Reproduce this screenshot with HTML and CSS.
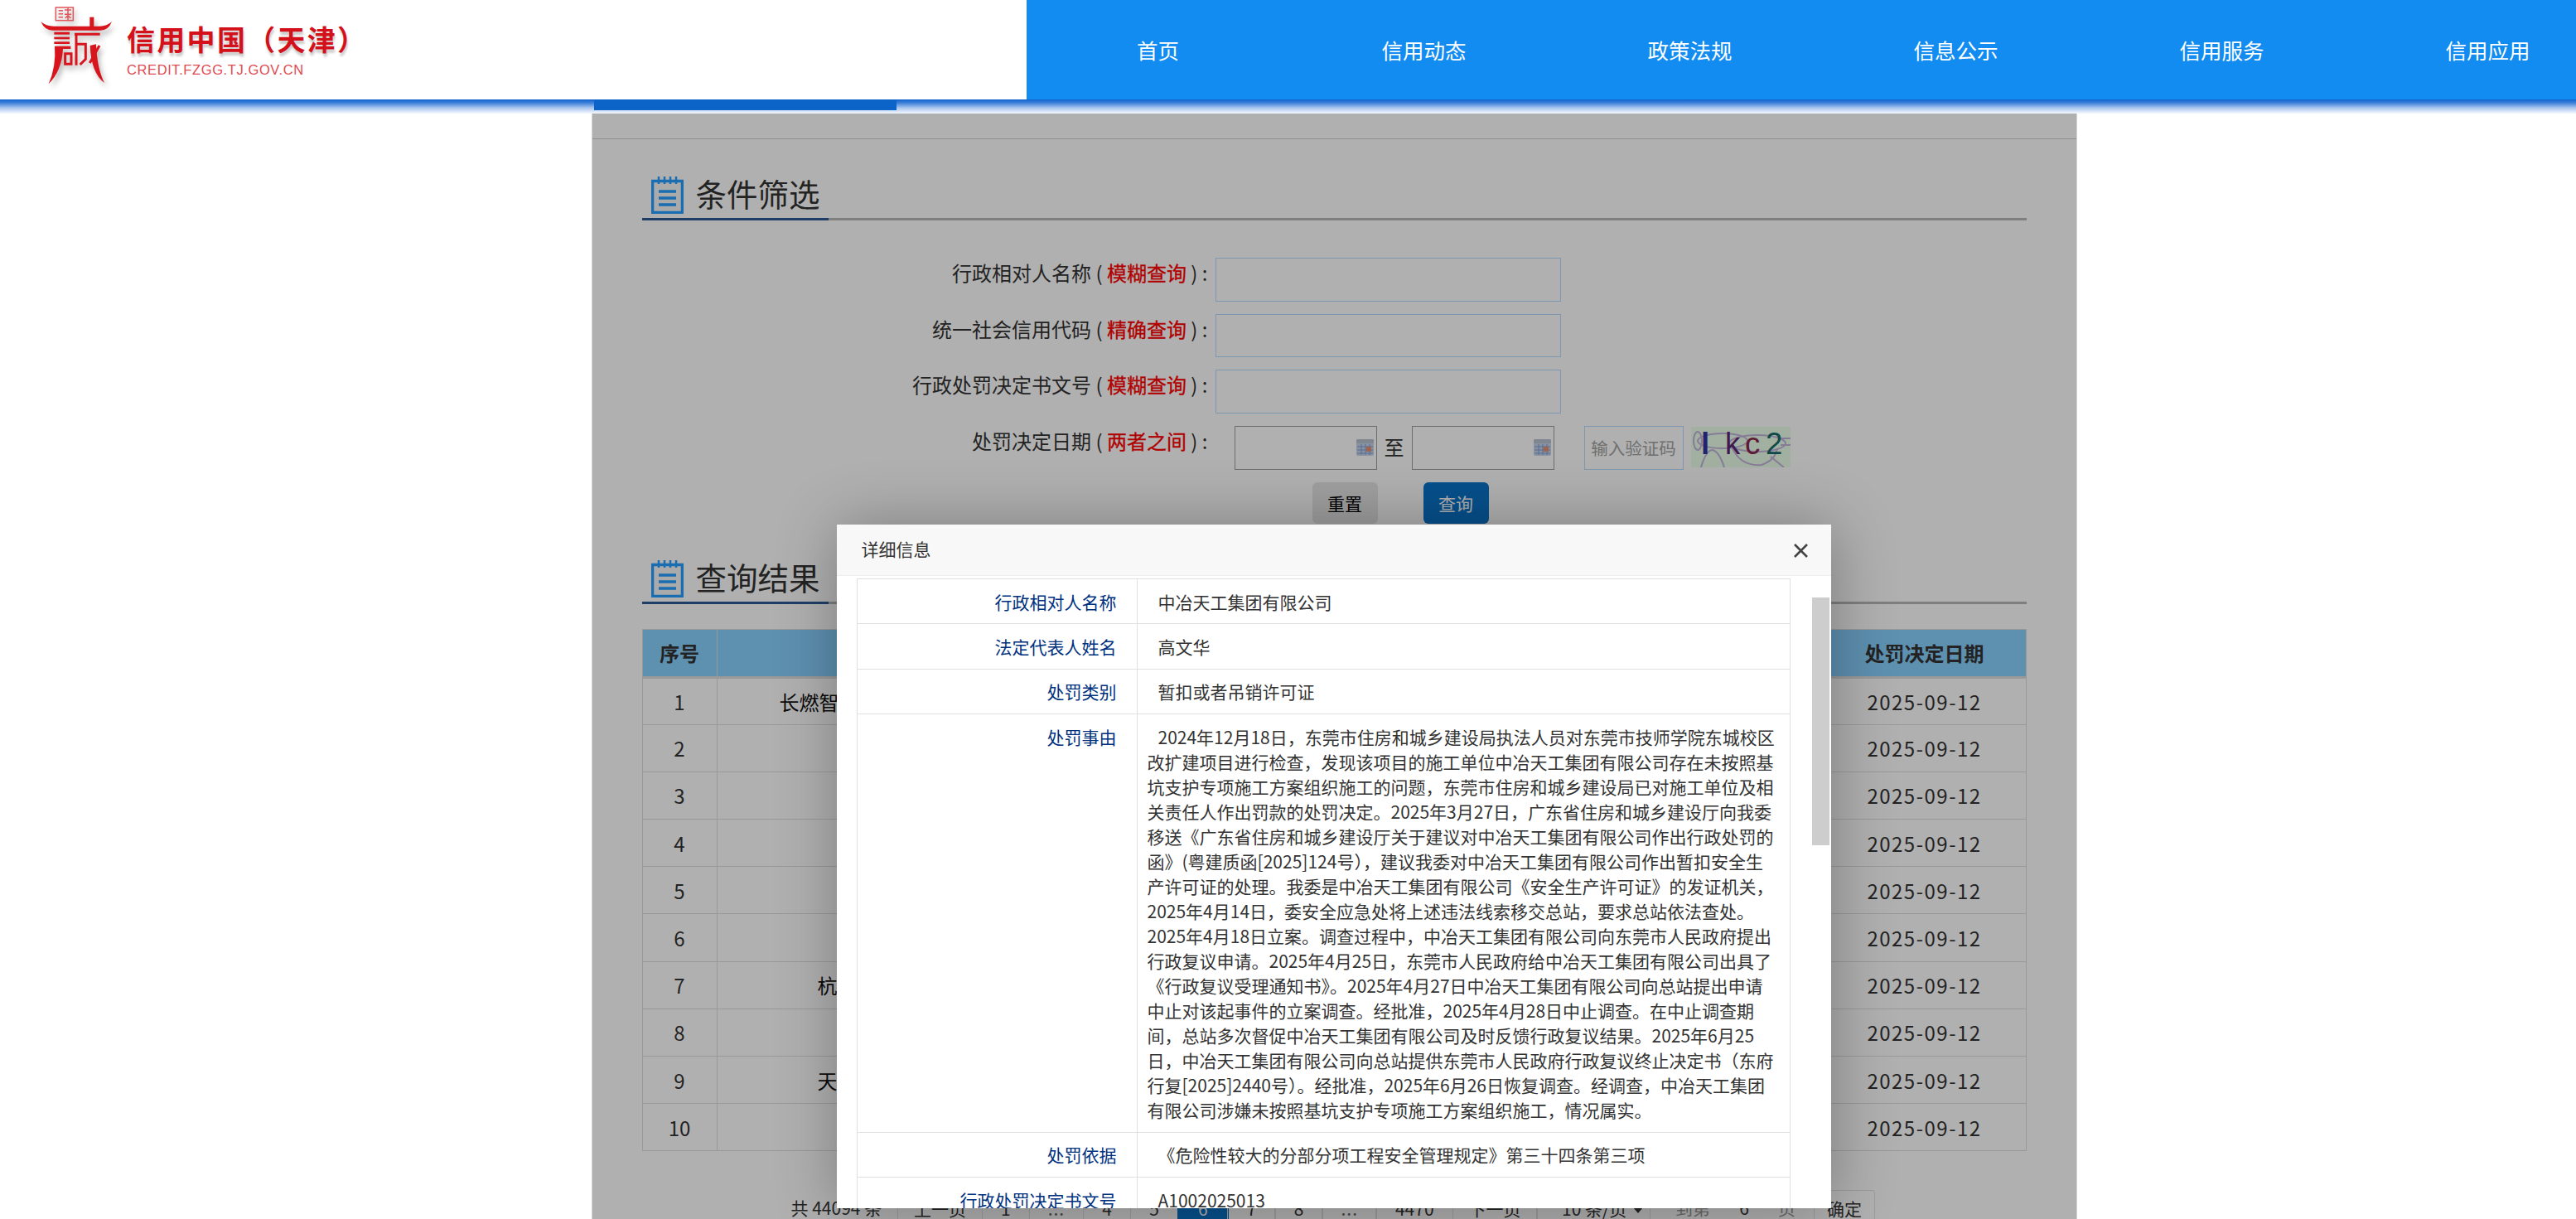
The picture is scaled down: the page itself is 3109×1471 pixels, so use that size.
FILE: index.html
```html
<!DOCTYPE html>
<html lang="zh-CN">
<head>
<meta charset="utf-8">
<title>信用中国（天津）</title>
<link rel="stylesheet" href="styles.css">
</head>
<body>
<header class="site-header">
  <div class="brand">
    <svg class="emblem" viewBox="0 0 110 120" aria-hidden="true">
      <g transform="scale(.3333)">
        <g fill="none" stroke="#e2555a" stroke-width="4.5">
          <rect x="82" y="27" width="63" height="47"/>
          <path d="M92 38h16M92 50h16M92 62h16M114 36h24M126 28v44M114 52h24M116 66l8-8M136 66l-8-8"/>
        </g>
        <g fill="#d8141c">
          <path d="M28 78Q45 95 75 95L240 95Q268 95 285 78Q272 112 240 110L75 110Q42 112 28 78Z"/>
          <rect x="205" y="62" width="15" height="40"/>
          <rect x="76" y="116" width="56" height="9"/>
          <rect x="76" y="134" width="56" height="8"/>
          <rect x="76" y="151" width="56" height="8"/>
          <path d="M78 167L136 167L136 177L108 177Q104 256 56 304Q84 240 78 167Z"/>
          <path d="M228 160Q232 250 258 300Q210 264 206 165Z"/>
        </g>
        <g fill="none" stroke="#d8141c" stroke-width="9">
          <path d="M116 194H138V232H116Z"/>
          <path d="M156 125V236M150 124H242M160 160H190V214L170 234"/>
          <path d="M240 165L205 228"/>
        </g>
      </g>
    </svg>
    <div class="brand-text">
      <div class="brand-name">信用中国（天津）</div>
      <div class="brand-url">CREDIT.FZGG.TJ.GOV.CN</div>
    </div>
  </div>
  <nav class="main-nav">
    <a>首页</a><a>信用动态</a><a>政策法规</a><a>信息公示</a><a>信用服务</a><a>信用应用</a>
  </nav>
</header>
<div class="strip"><div class="strip-tab"></div></div>

<main class="frame">
  <div class="frame-top"></div>
  <div class="content">
    <div class="sec-head">
      <div class="sec-title">
        <svg class="note-icon" viewBox="0 0 39 45" aria-hidden="true">
          <path class="note-body" d="M1.5 5.5H37.5V43.5H1.5Z"/>
          <path class="note-rings" d="M9 0V9M16 0V9M23 0V9M30 0V9"/>
          <path class="note-lines" d="M9 18H30M9 26H30M9 34H30"/>
        </svg>
        <span>条件筛选</span>
      </div>
    </div>

    <form class="filter">
      <div class="form-row">
        <label class="form-label">行政相对人名称 ( <em>模糊查询</em> ) :</label>
        <input class="text-input">
      </div>
      <div class="form-row">
        <label class="form-label">统一社会信用代码 ( <em>精确查询</em> ) :</label>
        <input class="text-input">
      </div>
      <div class="form-row">
        <label class="form-label">行政处罚决定书文号 ( <em>模糊查询</em> ) :</label>
        <input class="text-input">
      </div>
      <div class="form-row date-row">
        <label class="form-label">处罚决定日期 ( <em>两者之间</em> ) :</label>
        <div class="date-box">
          <svg class="cal-icon" viewBox="0 0 21 20" aria-hidden="true">
            <rect width="21" height="20" rx="2" fill="#c7d4e8"/>
            <rect width="21" height="5" rx="1.5" fill="#b9c3cf"/>
            <path d="M1 9H20M1 13H20M1 17H20M6 6V19M11 6V19M16 6V19" stroke="#7f9fd8" stroke-width="1"/>
            <rect x="12" y="9" width="6" height="6" fill="#e8906e"/>
          </svg>
        </div>
        <span class="date-sep">至</span>
        <div class="date-box">
          <svg class="cal-icon" viewBox="0 0 21 20" aria-hidden="true">
            <rect width="21" height="20" rx="2" fill="#c7d4e8"/>
            <rect width="21" height="5" rx="1.5" fill="#b9c3cf"/>
            <path d="M1 9H20M1 13H20M1 17H20M6 6V19M11 6V19M16 6V19" stroke="#7f9fd8" stroke-width="1"/>
            <rect x="12" y="9" width="6" height="6" fill="#e8906e"/>
          </svg>
        </div>
        <div class="captcha-input">输入验证码</div>
        <svg class="captcha" viewBox="0 0 120 49" aria-label="验证码">
          <rect width="120" height="49" fill="#ebffeb"/>
          <g fill="none" stroke="#c3b4dc" stroke-width="2">
            <ellipse cx="38" cy="17" rx="30" ry="9"/>
            <ellipse cx="8" cy="17" rx="5" ry="11"/>
            <ellipse cx="80" cy="20" rx="34" ry="10"/>
            <path d="M12 49Q18 28 26 28Q34 30 40 49"/>
            <path d="M48 22Q58 48 85 46Q102 40 104 26"/>
            <path d="M96 36L112 49M108 14H120M108 22H120"/>
          </g>
          <text class="cap-l" x="12" y="33">l</text>
          <text class="cap-k" x="41" y="33">k</text>
          <text class="cap-c" x="65" y="33">c</text>
          <text class="cap-2" x="90" y="33">2</text>
        </svg>
      </div>
      <div class="btn-row">
        <button type="button" class="btn btn-reset">重置</button>
        <button type="button" class="btn btn-query">查询</button>
      </div>
    </form>

    <div class="sec-head second">
      <div class="sec-title">
        <svg class="note-icon" viewBox="0 0 39 45" aria-hidden="true">
          <path class="note-body" d="M1.5 5.5H37.5V43.5H1.5Z"/>
          <path class="note-rings" d="M9 0V9M16 0V9M23 0V9M30 0V9"/>
          <path class="note-lines" d="M9 18H30M9 26H30M9 34H30"/>
        </svg>
        <span>查询结果</span>
      </div>
    </div>

    <table class="results">
      <colgroup><col class="c-no"><col class="c-name"><col class="c-date"></colgroup>
      <thead><tr><th>序号</th><th></th><th>处罚决定日期</th></tr></thead>
      <tbody>
        <tr><td>1</td><td class="name name-a">长燃智</td><td class="date">2025-09-12</td></tr>
        <tr><td>2</td><td></td><td class="date">2025-09-12</td></tr>
        <tr><td>3</td><td></td><td class="date">2025-09-12</td></tr>
        <tr><td>4</td><td></td><td class="date">2025-09-12</td></tr>
        <tr><td>5</td><td></td><td class="date">2025-09-12</td></tr>
        <tr><td>6</td><td></td><td class="date">2025-09-12</td></tr>
        <tr><td>7</td><td class="name name-b">杭</td><td class="date">2025-09-12</td></tr>
        <tr><td>8</td><td></td><td class="date">2025-09-12</td></tr>
        <tr><td>9</td><td class="name name-b">天</td><td class="date">2025-09-12</td></tr>
        <tr><td>10</td><td></td><td class="date">2025-09-12</td></tr>
      </tbody>
    </table>

    <div class="pager">
      <span class="pg-count">共 44094 条</span>
      <a class="pg wide">上一页</a>
      <a class="pg">1</a>
      <a class="pg dots">...</a>
      <a class="pg">4</a>
      <a class="pg">5</a>
      <a class="pg active">6</a>
      <a class="pg">7</a>
      <a class="pg">8</a>
      <a class="pg dots">...</a>
      <a class="pg">4470</a>
      <a class="pg wide">下一页</a>
      <span class="pg pg-limit">10 条/页<i class="caret"></i></span>
      <span class="pg-skip">到第</span>
      <span class="pg-input">6</span>
      <span class="pg-skip">页</span>
      <span class="pg-ok">确定</span>
    </div>
  </div>

  <div class="backdrop"></div>

  <section class="modal">
    <div class="modal-head">
      <span>详细信息</span>
      <svg class="close" viewBox="0 0 19 19" aria-label="关闭"><path d="M2 2L17 17M17 2L2 17"/></svg>
    </div>
    <div class="modal-body">
      <table class="detail">
        <colgroup><col class="d-label"><col class="d-value"></colgroup>
        <tr><th>行政相对人名称</th><td>中冶天工集团有限公司</td></tr>
        <tr><th>法定代表人姓名</th><td>高文华</td></tr>
        <tr><th>处罚类别</th><td>暂扣或者吊销许可证</td></tr>
        <tr><th>处罚事由</th><td class="long">2024年12月18日，东莞市住房和城乡建设局执法人员对东莞市技师学院东城校区<br>改扩建项目进行检查，发现该项目的施工单位中冶天工集团有限公司存在未按照基<br>坑支护专项施工方案组织施工的问题，东莞市住房和城乡建设局已对施工单位及相<br>关责任人作出罚款的处罚决定。2025年3月27日，广东省住房和城乡建设厅向我委<br>移送《广东省住房和城乡建设厅关于建议对中冶天工集团有限公司作出行政处罚的<br>函》(粤建质函[2025]124号），建议我委对中冶天工集团有限公司作出暂扣安全生<br>产许可证的处理。我委是中冶天工集团有限公司《安全生产许可证》的发证机关，<br>2025年4月14日，委安全应急处将上述违法线索移交总站，要求总站依法查处。<br>2025年4月18日立案。调查过程中，中冶天工集团有限公司向东莞市人民政府提出<br>行政复议申请。2025年4月25日，东莞市人民政府给中冶天工集团有限公司出具了<br>《行政复议受理通知书》。2025年4月27日中冶天工集团有限公司向总站提出申请<br>中止对该起事件的立案调查。经批准，2025年4月28日中止调查。在中止调查期<br>间，总站多次督促中冶天工集团有限公司及时反馈行政复议结果。2025年6月25<br>日，中冶天工集团有限公司向总站提供东莞市人民政府行政复议终止决定书（东府<br>行复[2025]2440号）。经批准，2025年6月26日恢复调查。经调查，中冶天工集团<br>有限公司涉嫌未按照基坑支护专项施工方案组织施工，情况属实。</td></tr>
        <tr><th>处罚依据</th><td>《危险性较大的分部分项工程安全管理规定》第三十四条第三项</td></tr>
        <tr><th>行政处罚决定书文号</th><td>A1002025013</td></tr>
      </table>
      <div class="scroll-thumb"></div>
    </div>
  </section>
</main>
</body>
</html>
```

FILE: styles.css
```css
* { box-sizing: border-box; }
html, body { margin: 0; height: 100%; }
body {
  width: 3109px;
  height: 1471px;
  overflow: hidden;
  background: #fff;
  color: #333;
  font-family: "Noto Sans CJK SC", "Noto Sans", sans-serif;
  font-size: 24px;
}

/* Header */
.site-header { display: flex; height: 120px; }
.brand { width: 1239px; display: flex; padding-left: 40px; background: #fff; }
.emblem { width: 110px; height: 120px; margin-right: 3px; flex: none; filter: drop-shadow(3px 5px 3px rgba(0,0,0,.28)); }
.brand-text { padding-top: 24px; }
.brand-name {
  font-size: 34px;
  font-weight: 700;
  line-height: 46px;
  letter-spacing: 2.3px;
  color: #d4101a;
  white-space: nowrap;
  text-shadow: 1px 4px 3px rgba(0,0,0,.22);
}
.brand-url {
  margin-top: 4px;
  font-family: "Liberation Sans", sans-serif;
  font-size: 16.5px;
  line-height: 20px;
  letter-spacing: .6px;
  color: #df4a50;
  white-space: nowrap;
}
.main-nav { flex: 1; display: flex; min-width: 0; overflow: hidden; background: #128cf0; }
.main-nav a {
  flex: 0 0 321px;
  text-align: center;
  line-height: 120px;
  color: #fff;
  font-size: 25.5px;
  position: relative;
  left: -2px;
}

.strip {
  height: 17px;
  padding-left: 717px;
  background: linear-gradient(#0f60cc, #3f82da 25%, #a9c6ee 60%, #f5f8fe);
}
.strip-tab { width: 365px; height: 13px; background: #0c63c8; }

/* Embedded frame */
.frame {
  position: relative;
  width: 1793px;
  height: 1334px;
  margin-left: 714px;
  border-left: 1.5px solid #d4d4d4;
  border-right: 1.5px solid #d4d4d4;
  overflow: hidden;
  background: #fff;
}
.frame-top { height: 31px; border-bottom: 1.5px solid #d0d0d0; }
.content { padding: 45px 0 0 59.5px; width: 1731px; }

.sec-head { width: 1671px; height: 53px; border-bottom: 3px solid #b9b9b9; }
.sec-head.second { margin-top: 44px; }
.sec-title {
  display: flex;
  align-items: flex-start;
  width: 225px;
  height: 53px;
  padding-left: 11px;
  border-bottom: 3px solid #2d5b94;
  font-size: 37.5px;
  line-height: 40px;
  white-space: nowrap;
}
.note-icon { width: 39px; height: 45px; margin-right: 15px; flex: none; }
.note-body { fill: #f6f6f6; stroke: #269eff; stroke-width: 3.5; }
.note-rings { fill: none; stroke: #269eff; stroke-width: 2.5; }
.note-lines { fill: none; stroke: #269eff; stroke-width: 3.5; }

/* Filter form */
.filter { padding-top: 45px; }
.form-row { display: flex; align-items: flex-start; height: 67.5px; }
.form-label {
  width: 683px;
  margin-right: 9px;
  text-align: right;
  line-height: 36px;
  white-space: pre;
}
.form-label em { font-style: normal; color: #f00; -webkit-text-stroke: .3px #f00; }
.text-input {
  width: 417px;
  height: 52.5px;
  border: 1.5px solid #b5dcff;
  background: transparent;
  padding: 0;
  margin: 0;
  display: block;
}
.date-row { height: 68px; }
.date-row .form-label { margin-right: 32px; }
.date-box {
  position: relative;
  width: 172px;
  height: 53px;
  border: 1.5px solid #9f9f9f;
  flex: none;
}
.cal-icon { position: absolute; right: 3px; top: 15px; width: 21px; height: 20px; }
.date-sep { width: 42px; height: 53px; line-height: 50px; text-align: center; flex: none; }
.captcha-input {
  width: 120px;
  height: 53px;
  margin-left: 36px;
  border: 1.5px solid #b5dcff;
  color: #a2a2a2;
  font-size: 20.5px;
  line-height: 50px;
  text-align: center;
  white-space: nowrap;
  flex: none;
}
.captcha { width: 120px; height: 49px; margin-left: 9px; margin-top: 1px; flex: none; }
.captcha text { font-family: "Liberation Sans", sans-serif; font-size: 36.5px; }
.cap-l { fill: #3232a0; font-weight: 700; }
.cap-k { fill: #5b2673; }
.cap-c { fill: #88264b; }
.cap-2 { fill: #166b68; }

.btn-row { display: flex; gap: 55px; padding-left: 809px; }
.btn {
  width: 79px;
  height: 50px;
  padding: 0;
  border: 0;
  border-radius: 6px;
  font-family: inherit;
  font-size: 21px;
}
.btn-reset { background: #e6e6e6; color: #000; }
.btn-query { background: #0a74cb; color: #fff; }

/* Results table */
.results {
  width: 1671px;
  margin-top: 30px;
  table-layout: fixed;
  border-collapse: collapse;
}
.c-no { width: 90px; }
.c-date { width: 245px; }
.results th, .results td { border: 1.5px solid #dedede; padding: 0; text-align: center; white-space: nowrap; }
.results th { height: 58px; background: #88d1ff; font-weight: 700; border-bottom-width: 3px; }
.results td { height: 57.2px; }
.results td.date { letter-spacing: 1.5px; }
.results td.name { text-align: left; color: #111; }
.name-a { padding-left: 75px !important; }
.name-b { padding-left: 121px !important; }

/* Pagination */
.pager {
  display: flex;
  height: 42px;
  margin-top: 46.5px;
  margin-left: 180px;
  font-size: 21px;
  line-height: 42px;
  white-space: nowrap;
}
.pg-count { width: 130px; flex: none; }
.pg {
  flex: none;
  padding: 0 22.5px;
  border: 1.5px solid #e2e2e2;
  margin-left: -1.5px;
}
.pg.wide { padding: 0 19px; }
.pg.dots { padding: 0 22px; color: #666; letter-spacing: 1px; }
.pg.active { padding: 0 24px; background: #0a74cb; border-color: #0a74cb; color: #fff; }
.pg-limit { padding: 0 0 0 30px; width: 138px; }
.caret {
  display: inline-block;
  margin-left: 8px;
  vertical-align: 3px;
  border: 6px solid transparent;
  border-top: 7px solid #333;
  border-bottom: 0;
}
.pg-skip { color: #999; flex: none; margin-left: 30px; }
.pg-input { width: 46px; margin-left: 18px; text-align: center; flex: none; }
.pg-skip + .pg-input + .pg-skip { margin-left: 18px; }
.pg-ok {
  flex: none;
  margin-left: 22px;
  padding: 0 15px;
  border: 1.5px solid #e2e2e2;
  border-radius: 3px;
}

/* Overlay */
.backdrop { position: absolute; inset: 0; z-index: 1; background: rgba(0,0,0,.31); }
.modal {
  position: absolute;
  z-index: 2;
  left: 294.5px;
  top: 496px;
  width: 1200px;
  height: 825px;
  display: flex;
  flex-direction: column;
  background: #fff;
  border-radius: 3px 3px 0 0;
  box-shadow: 1.5px 1.5px 75px rgba(0,0,0,.3);
}
.modal-head {
  flex: none;
  height: 62px;
  padding: 0 0 4px 30px;
  display: flex;
  align-items: center;
  justify-content: space-between;
  background: #f8f8f8;
  border-bottom: 1.5px solid #eee;
  font-size: 21px;
  color: #333;
}
.close { width: 19px; height: 19px; margin: 6px 27px 0 0; }
.close path { fill: none; stroke: #444; stroke-width: 2.6; }
.modal-body { position: relative; flex: 1; min-height: 0; overflow: hidden; padding: 3px 0 0 24px; }
.detail {
  width: 1127px;
  table-layout: fixed;
  border-collapse: collapse;
  font-size: 21px;
  line-height: 30px;
}
.d-label { width: 338px; }
.detail th, .detail td { border: 1.5px solid #e0e0e0; padding: 11.7px 0; vertical-align: top; white-space: nowrap; }
.detail th { padding-right: 24px; text-align: right; font-weight: 400; color: #00317f; }
.detail td { padding-left: 25px; color: #333; }
.detail td.long { padding-left: 12px; text-indent: 13px; }
.scroll-thumb { position: absolute; top: 26px; right: 2px; width: 21px; height: 299px; background: #cdcdcd; }
```
